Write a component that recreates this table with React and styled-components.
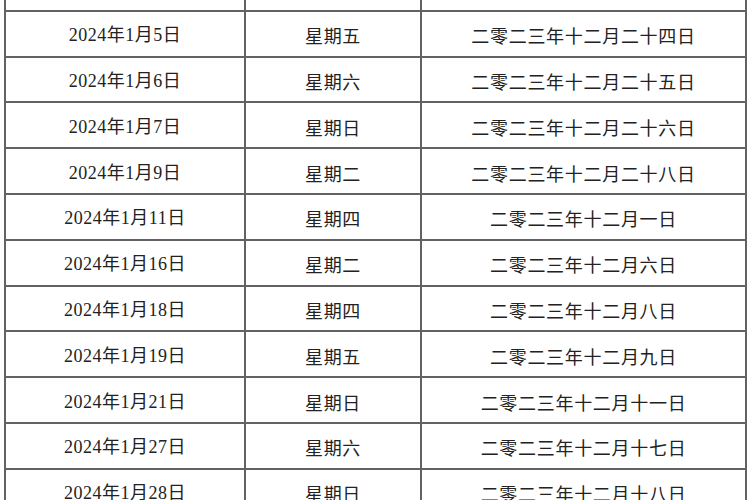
import React from 'react';
import styled, { createGlobalStyle } from 'styled-components';

const rows = [
  ['2024年1月4日', '星期四', '二零二三年十二月二十三日'],
  ['2024年1月5日', '星期五', '二零二三年十二月二十四日'],
  ['2024年1月6日', '星期六', '二零二三年十二月二十五日'],
  ['2024年1月7日', '星期日', '二零二三年十二月二十六日'],
  ['2024年1月9日', '星期二', '二零二三年十二月二十八日'],
  ['2024年1月11日', '星期四', '二零二三年十二月一日'],
  ['2024年1月16日', '星期二', '二零二三年十二月六日'],
  ['2024年1月18日', '星期四', '二零二三年十二月八日'],
  ['2024年1月19日', '星期五', '二零二三年十二月九日'],
  ['2024年1月21日', '星期日', '二零二三年十二月十一日'],
  ['2024年1月27日', '星期六', '二零二三年十二月十七日'],
  ['2024年1月28日', '星期日', '二零二三年十二月十八日'],
];

const GlobalStyle = createGlobalStyle`
  html, body {
    margin: 0;
    padding: 0;
    background: #ffffff;
    overflow: hidden;
  }
`;

const Page = styled.div`
  width: 750px;
  height: 500px;
  overflow: hidden;
  background: #ffffff;
`;

const Table = styled.table`
  border-collapse: collapse;
  table-layout: fixed;
  width: 743px;
  margin: -36px 0 0 4px;
`;

const Row = styled.tr`
  height: 45.8px;
`;

const Cell = styled.td`
  width: ${(p) => p.$w}px;
  border: 2px solid #626262;
  padding: 3px 0 0;
  text-align: center;
  vertical-align: middle;
  color: #222222;
  font-family: ${(p) =>
    p.$serif
      ? '"Liberation Serif", "Noto Sans CJK SC", serif'
      : '"Noto Sans CJK SC", "Noto Sans", sans-serif'};
  font-size: 18px;
  letter-spacing: ${(p) => (p.$serif ? '0.5px' : '0.7px')};
  line-height: 1;
  white-space: nowrap;
`;

export default function App() {
  return (
    <Page>
      <GlobalStyle />
      <Table>
        <tbody>
          {rows.map(([date, week, lunar]) => (
            <Row key={date}>
              <Cell $w={238} $serif>{date}</Cell>
              <Cell $w={174}>{week}</Cell>
              <Cell $w={323}>{lunar}</Cell>
            </Row>
          ))}
        </tbody>
      </Table>
    </Page>
  );
}
